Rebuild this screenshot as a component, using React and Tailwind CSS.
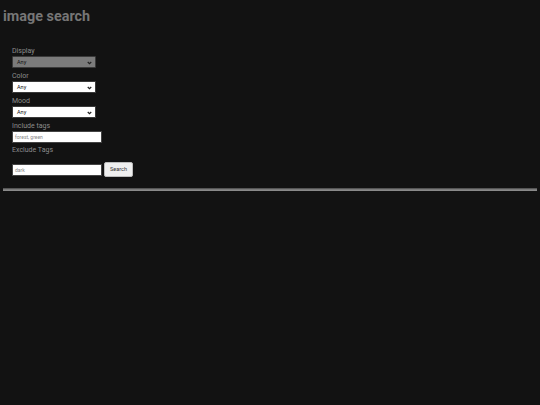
import React from 'react';

const sans = { fontFamily: 'Roboto, "Liberation Sans", sans-serif' };

function Chevron() {
  return (
    <svg width="5" height="4" viewBox="0 0 10 8" className="absolute right-[3px] top-[4px]">
      <path d="M1.5 2 L5 5.5 L8.5 2" fill="none" stroke="#222" strokeWidth="2.4" />
    </svg>
  );
}

function Field({ label, grey }) {
  return (
    <div className="mb-[4px]">
      <div className="text-[7px] leading-[9px] text-[#8c8c8c]">{label}</div>
      <div
        className={`relative w-[84px] h-[12px] border border-[#3a3a3a] rounded-[1px] ${
          grey ? 'bg-[#7b7b7b]' : 'bg-white'
        }`}
      >
        <span className="absolute left-[4px] top-[2px] text-[5.5px] leading-[7px] text-[#111]">Any</span>
        <Chevron />
      </div>
    </div>
  );
}

function TextBox({ placeholder }) {
  return (
    <div className="w-[90px] h-[12px] bg-white border border-[#444] flex items-center px-[2px]">
      <span className="text-[5px] leading-[6px] text-[#8a8a8a]">{placeholder}</span>
    </div>
  );
}

export default function App() {
  return (
    <div className="min-h-[405px] w-[540px] bg-[#121212] px-[3px] pt-[8px]" style={sans}>
      <h1 className="text-[14.4px] leading-[18px] font-bold text-[#767676]">image search</h1>

      <div className="mt-[21px] pl-[9px]">
        <Field label="Display" grey />
        <Field label="Color" />
        <Field label="Mood" />

        <div className="text-[7px] leading-[9px] text-[#8c8c8c]">Include tags</div>
        <TextBox placeholder="forest, green" />

        <div className="mt-[3px] text-[7px] leading-[9px] text-[#8c8c8c]">Exclude Tags</div>
        <div className="mt-[7px] flex items-center gap-[2px]">
          <TextBox placeholder="dark" />
          <button className="w-[29px] h-[15px] bg-[#efefef] border border-[#bbb] rounded-[2px] text-[5.5px] leading-[7px] text-[#333]">
            Search
          </button>
        </div>
      </div>

      <div className="mt-[11px] h-[3px] bg-[#7a7a7a] border-t border-[#555] border-b border-b-[#8a8a8a]" />
    </div>
  );
}
